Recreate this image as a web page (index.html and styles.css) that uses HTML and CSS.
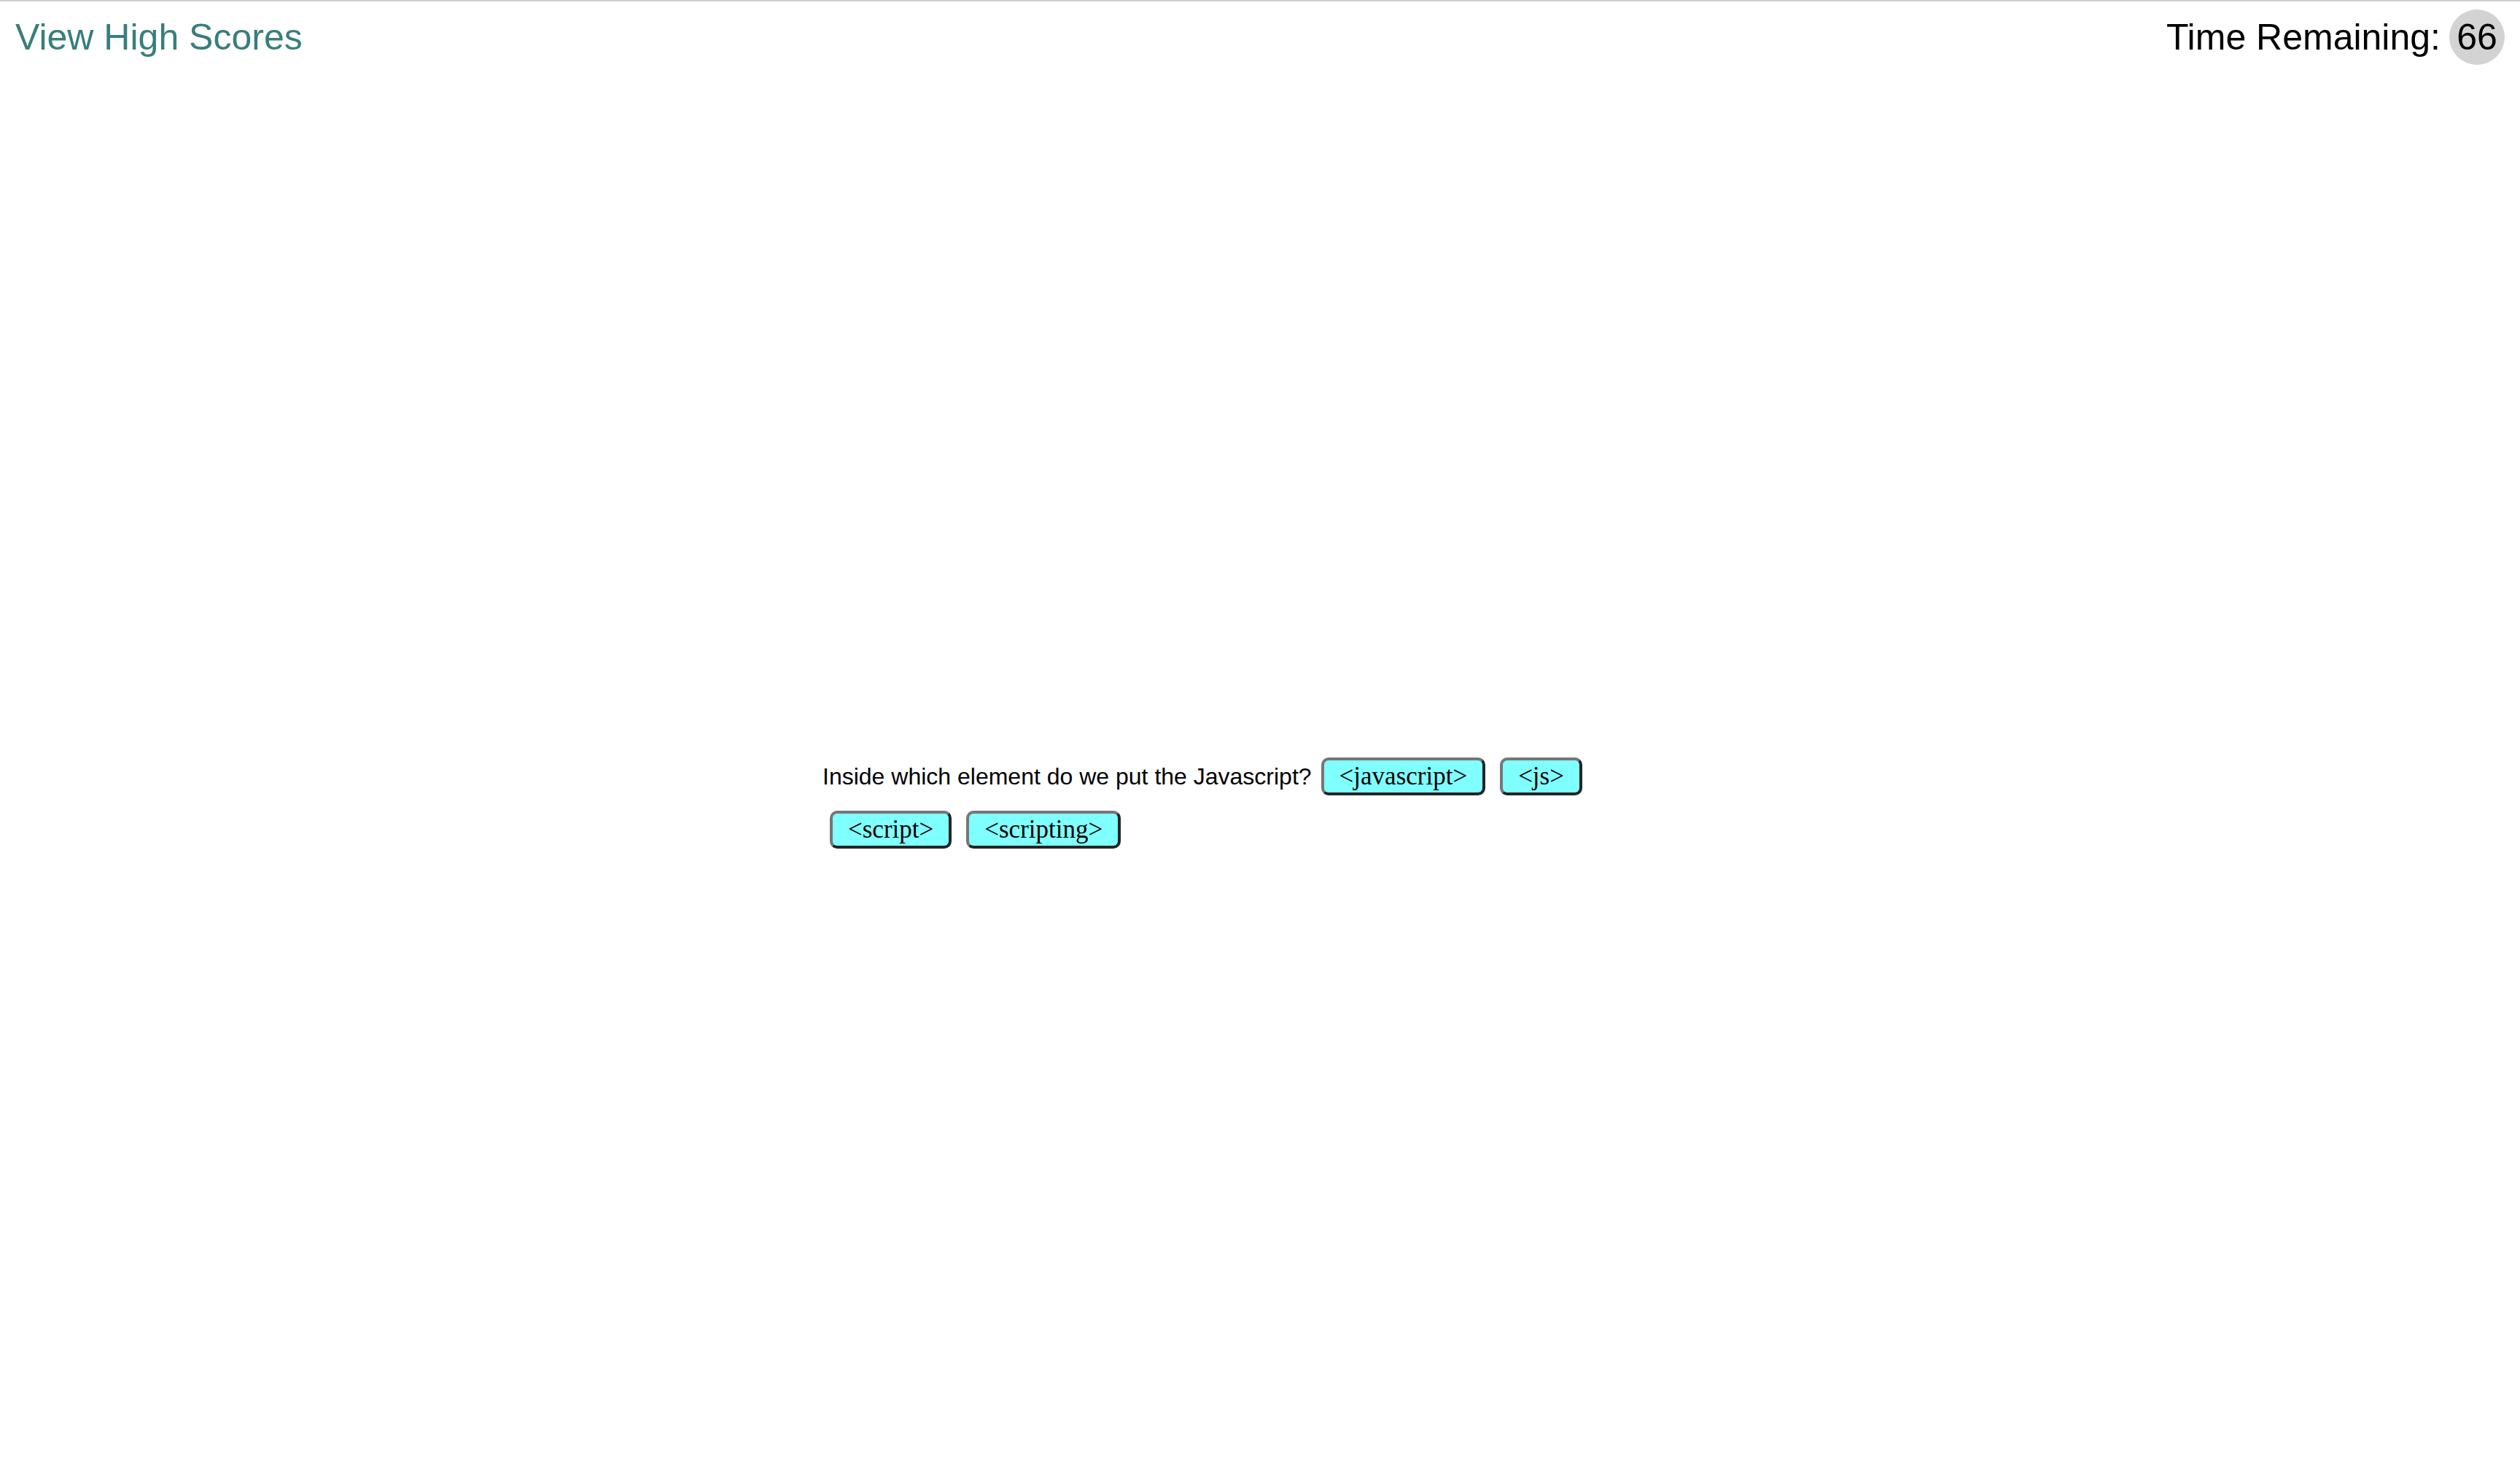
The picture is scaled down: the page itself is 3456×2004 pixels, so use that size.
FILE: index.html
```html
<!DOCTYPE html>
<html lang="en">
<head>
<meta charset="utf-8">
<title>Code Quiz</title>
<link rel="stylesheet" href="styles.css">
</head>
<body>
<header class="topbar">
  <a class="scores-link" href="#">View High Scores</a>
  <div class="timer">
    <span class="timer-label">Time Remaining:</span>
    <span class="timer-count">66</span>
  </div>
</header>
<main class="quiz">
  <div class="question"><span class="question-text">Inside which element do we put the Javascript?</span><button class="answer">&lt;javascript&gt;</button><button class="answer">&lt;js&gt;</button><button class="answer">&lt;script&gt;</button><button class="answer">&lt;scripting&gt;</button></div>
</main>
</body>
</html>
```

FILE: styles.css
```css
html, body {
  margin: 0;
  padding: 0;
  background: #ffffff;
}

body {
  border-top: 2px solid #cfcfcf;
  font-family: "Liberation Sans", Arial, sans-serif;
  color: #000;
}

.topbar {
  display: flex;
  justify-content: space-between;
  align-items: center;
  padding: 11px 21px 0 21px;
  font-size: 50px;
}

.scores-link {
  color: #387e7c;
  text-decoration: none;
}

.timer {
  display: flex;
  align-items: center;
}

.timer-count {
  display: flex;
  align-items: center;
  justify-content: center;
  width: 76px;
  height: 76px;
  margin-left: 12px;
  border-radius: 50%;
  background: #d3d3d3;
}

.quiz {
  width: 1200px;
  margin: 939px auto 0 auto;
}

.question {
  font-size: 32px;
  line-height: normal;
}

.answer {
  display: inline-block;
  margin: 10.5px 10px;
  padding: 2px 21px;
  font-family: "Liberation Serif", "Times New Roman", serif;
  font-size: 35px;
  color: #000;
  background: #80ffff;
  border: 4px solid;
  border-color: #767676 #242424 #242424 #767676;
  border-radius: 10px;
  cursor: pointer;
}

.question-text + .answer {
  margin-left: 13px;
}
```
